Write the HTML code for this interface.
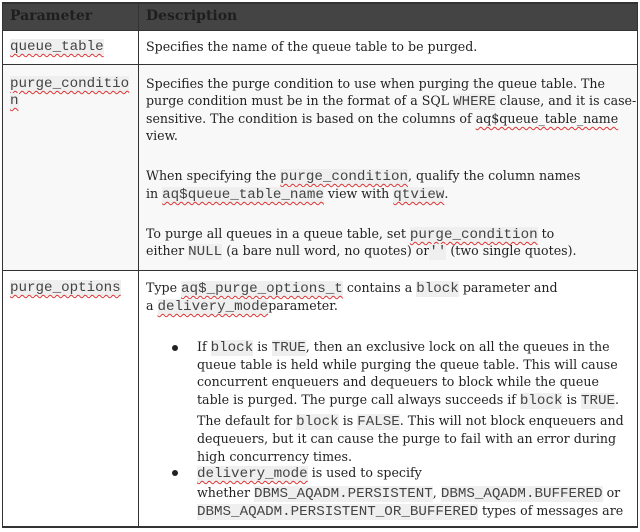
<!DOCTYPE html>
<html><head><meta charset="utf-8"><style>
body{margin:0;width:640px;height:532px;background:#fff;position:relative;overflow:hidden;font-family:"DejaVu Serif",serif;font-size:12.6px;color:#222}
.b{position:absolute;background:#333}
.l{position:absolute;white-space:nowrap;line-height:18px;height:18px}
code{font-family:"Liberation Mono",monospace;font-size:14.2px;background:#efefef;color:#444}
.u{text-decoration:underline wavy #d33;text-decoration-thickness:1px;text-underline-offset:3px}
.bul{position:absolute;left:172px;width:6px;height:6px;border-radius:50%;background:#222}
</style></head><body>
<div style="position:absolute;left:2px;top:3px;width:636px;height:28px;background:#444"></div>
<div style="position:absolute;left:2px;top:65px;width:636px;height:206px;background:#f8f8f8"></div>
<div class="l" style="left:10px;top:7px;font-weight:bold;color:#1e1e1e;font-size:14px">Parameter</div>
<div class="l" style="left:146px;top:7px;font-weight:bold;color:#1e1e1e;font-size:14px">Description</div>
<div class="b" style="left:2px;top:2px;width:636px;height:2px"></div>
<div class="b" style="left:2px;top:30px;width:636px;height:1px"></div>
<div class="b" style="left:2px;top:64px;width:636px;height:1px"></div>
<div class="b" style="left:2px;top:270px;width:636px;height:1px"></div>
<div class="b" style="left:2px;top:526px;width:636px;height:2px"></div>
<div class="b" style="left:2px;top:2px;width:1px;height:526px"></div>
<div class="b" style="left:637px;top:2px;width:1px;height:526px"></div>
<div class="b" style="left:138px;top:2px;width:1px;height:526px"></div>

<div class="l" style="left:10px;top:37px"><code class="u">queue_table</code></div>
<div class="l" style="left:146px;top:38px">Specifies the name of the queue table to be purged.</div>

<div class="l" style="left:10px;top:74px"><code class="u">purge_conditio</code></div>
<div class="l" style="left:10px;top:91px"><code class="u">n</code></div>
<div class="l" style="left:146px;top:75px">Specifies the purge condition to use when purging the queue table. The</div>
<div class="l" style="left:146px;top:92px">purge condition must be in the format of a SQL <code>WHERE</code> clause, and it is case-</div>
<div class="l" style="left:146px;top:110px">sensitive. The condition is based on the columns of <span class="u">aq$queue_table_name</span></div>
<div class="l" style="left:146px;top:127px">view.</div>
<div class="l" style="left:146px;top:167px">When specifying the <code class="u">purge_condition</code>, qualify the column names</div>
<div class="l" style="left:146px;top:185px">in <code class="u">aq$queue_table_name</code> view with <code class="u">qtview</code>.</div>
<div class="l" style="left:146px;top:225px">To purge all queues in a queue table, set <code class="u">purge_condition</code> to</div>
<div class="l" style="left:146px;top:242px">either <code>NULL</code> (a bare null word, no quotes) or<code>''</code> (two single quotes).</div>

<div class="l" style="left:10px;top:278px"><code class="u">purge_options</code></div>
<div class="l" style="left:146px;top:279px">Type <code class="u">aq$_purge_options_t</code> contains a <code>block</code> parameter and</div>
<div class="l" style="left:146px;top:297px">a <code class="u">delivery_mode</code>parameter.</div>
<div class="bul" style="top:345px"></div>
<div class="l" style="left:197px;top:338px">If <code>block</code> is <code>TRUE</code>, then an exclusive lock on all the queues in the</div>
<div class="l" style="left:197px;top:356px">queue table is held while purging the queue table. This will cause</div>
<div class="l" style="left:197px;top:373px">concurrent enqueuers and dequeuers to block while the queue</div>
<div class="l" style="left:197px;top:391px">table is purged. The purge call always succeeds if <code>block</code> is <code>TRUE</code>.</div>
<div class="l" style="left:197px;top:412px">The default for <code>block</code> is <code>FALSE</code>. This will not block enqueuers and</div>
<div class="l" style="left:197px;top:430px">dequeuers, but it can cause the purge to fail with an error during</div>
<div class="l" style="left:197px;top:448px">high concurrency times.</div>
<div class="bul" style="top:470px"></div>
<div class="l" style="left:197px;top:464px"><code class="u">delivery_mode</code> is used to specify</div>
<div class="l" style="left:197px;top:484px">whether <code>DBMS_AQADM.PERSISTENT</code>, <code>DBMS_AQADM.BUFFERED</code> or</div>
<div class="l" style="left:197px;top:502px"><code>DBMS_AQADM.PERSISTENT_OR_BUFFERED</code> types of messages are</div>
</body></html>
